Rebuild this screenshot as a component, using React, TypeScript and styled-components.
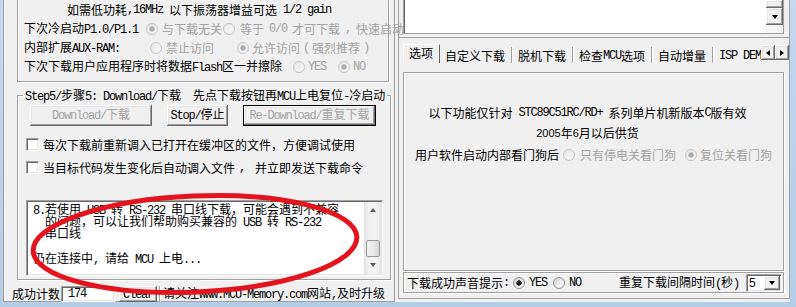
import React from "react";
import styled, { createGlobalStyle, css } from "styled-components";

const FACE = "#f0f0f0";
const SHADOW = "#a0a0a0";
const DARK = "#696969";
const GRAY_TEXT = "#a3a3a3";

const GlobalStyle = createGlobalStyle`
  * { box-sizing: border-box; }
  html, body { margin: 0; padding: 0; }
  body {
    background: #b9d0ea;
    font-family: "Noto Sans CJK SC", "Liberation Sans", sans-serif;
    font-size: 12px;
    line-height: 14px;
    color: #000;
  }
`;

const raised = css`
  background: ${FACE};
  box-shadow: inset -1px -1px ${DARK}, inset 1px 1px #fff, inset -2px -2px ${SHADOW},
    inset 2px 2px #e3e3e3;
`;

const sunken = css`
  background: #fff;
  border: 1px solid;
  border-color: ${SHADOW} #fff #fff ${SHADOW};
  box-shadow: inset 1px 1px ${DARK}, inset -1px -1px #e3e3e3;
`;

const etched = css`
  border: 1px solid ${SHADOW};
  box-shadow: inset 1px 1px #fff, 1px 1px 0 #fff;
`;

// latin runs: SimSun draws them half width, 6px a glyph
const L = styled.span`
  font-family: "Liberation Mono", "DejaVu Sans Mono", monospace;
  font-size: 12px;
  letter-spacing: -1.2px;
  white-space: pre;
`;

const Num = styled.span`
  font-family: "Liberation Sans", Arial, sans-serif;
  font-size: 11px;
`;

type Dir = "up" | "down" | "left" | "right";

const Tri = styled.span<{ $dir: Dir; $color?: string }>`
  display: block;
  width: 0;
  height: 0;
  ${({ $dir, $color = "#000" }) => {
    const side = "3.5px solid transparent";
    const fill = `4px solid ${$color}`;
    if ($dir === "down") return css`border-left: ${side}; border-right: ${side}; border-top: ${fill};`;
    if ($dir === "up") return css`border-left: ${side}; border-right: ${side}; border-bottom: ${fill};`;
    if ($dir === "left") return css`border-top: ${side}; border-bottom: ${side}; border-right: ${fill};`;
    return css`border-top: ${side}; border-bottom: ${side}; border-left: ${fill};`;
  }}
`;

const Window = styled.div`
  position: relative;
  width: 796px;
  height: 307px;
  overflow: hidden;
  padding: 0 6px 5px 3px;
  background: linear-gradient(to bottom, #c4d7ed, #b4cce7);
`;

const Client = styled.div`
  display: flex;
  gap: 3px;
  height: 302px;
  background: ${FACE};
`;

const Panel = styled.div<{ $h: number }>`
  flex: none;
  display: flex;
  flex-direction: column;
  width: 392px;
  height: ${(p) => p.$h}px;
  border: 1px solid ${SHADOW};
  border-top: none;
`;

/* ---------- left side ---------- */

const TopGroup = styled.div`
  margin-left: 13px;
  width: 372px;
  height: 82px;
  border: 1px solid ${SHADOW};
  border-top: none;
  box-shadow: inset 1px 0 #fff, 1px 1px 0 #fff;
`;

const Row = styled.div<{ $center?: boolean }>`
  display: flex;
  align-items: center;
  height: 19px;
  white-space: nowrap;
  padding-left: ${(p) => (p.$center ? 0 : 6)}px;
  padding-right: ${(p) => (p.$center ? 8 : 0)}px;
  justify-content: ${(p) => (p.$center ? "center" : "flex-start")};
`;

const Cell = styled.span<{ $w: number }>`
  flex: none;
  width: ${(p) => p.$w}px;
`;

const Option = styled.span<{ $w?: number; $ml?: number; $gap?: number; $disabled?: boolean }>`
  flex: none;
  display: flex;
  align-items: center;
  gap: ${(p) => p.$gap ?? 4}px;
  margin-left: ${(p) => p.$ml ?? 0}px;
  ${(p) => p.$w && css`width: ${p.$w}px;`}
  color: ${(p) => (p.$disabled ? GRAY_TEXT : "inherit")};
`;

const RadioMark = styled.span<{ $checked?: boolean; $disabled?: boolean }>`
  flex: none;
  width: 12px;
  height: 12px;
  border-radius: 50%;
  border: 1px solid ${(p) => (p.$disabled ? "#c6c6c6" : "#8e8f8f")};
  background: ${(p) => {
    const base = p.$disabled
      ? "linear-gradient(135deg, #e6e6e6, #fafafa)"
      : "linear-gradient(135deg, #d4d4d4, #ffffff)";
    if (!p.$checked) return base;
    const dot = p.$disabled ? "#adadad" : "#1e1e1e";
    return `radial-gradient(circle, ${dot} 0 2.4px, transparent 3px), ${base}`;
  }};
`;

const GroupBox = styled.div`
  margin: 13px 0 0 13px;
  width: 374px;
  height: 186px;
  padding: 0 7px 0 8px;
  ${etched}
`;

const Caption = styled.div`
  width: fit-content;
  height: 14px;
  margin: -8px 0 0 -3px;
  padding: 0 2px;
  background: ${FACE};
  white-space: nowrap;
`;

const ButtonRow = styled.div`
  display: flex;
  gap: 15px;
  margin-top: 3px;
  padding-left: 4px;
`;

const PushButton = styled.button<{ $w: number; $default?: boolean }>`
  flex: none;
  width: ${(p) => p.$w}px;
  height: 21px;
  margin: 0;
  padding: 0;
  font: inherit;
  line-height: 14px;
  white-space: nowrap;
  border: ${(p) => (p.$default ? "1px solid #000" : "none")};
  color: ${(p) => (p.disabled ? GRAY_TEXT : "#000")};
  ${raised}
`;

const CheckRow = styled.label<{ $mt: number }>`
  display: flex;
  align-items: center;
  gap: 4px;
  height: 18px;
  margin-top: ${(p) => p.$mt}px;
  white-space: nowrap;
`;

const CheckBox = styled.span`
  flex: none;
  width: 13px;
  height: 13px;
  ${sunken}
`;

const Memo = styled.div`
  display: flex;
  margin-top: 23px;
  height: 76px;
  padding: 1px;
  ${sunken}
`;

const MemoText = styled.div`
  flex: 1;
  padding: 1px 0 0 5px;
`;

const MemoLine = styled.div`
  height: 12.3px;
  line-height: 12.3px;
  white-space: pre;
`;

const VScroll = styled.div`
  flex: none;
  width: 17px;
  display: flex;
  flex-direction: column;
  background: linear-gradient(to right, #e2e2e2, #f3f3f3 30%, #f3f3f3 70%, #e6e6e6);
`;

const ScrollArrow = styled.div`
  flex: none;
  height: 17px;
  display: flex;
  align-items: center;
  justify-content: center;
`;

const ScrollTrack = styled.div`
  flex: 1;
  display: flex;
  flex-direction: column;
  justify-content: flex-end;
  align-items: center;
`;

const Thumb = styled.div`
  width: 14px;
  height: 17px;
  border: 1px solid #979797;
  border-radius: 2px;
  background: linear-gradient(to right, #f4f4f4, #e8e8e8 50%, #d6d6d6);
`;

const StatusRow = styled.div`
  display: flex;
  align-items: center;
  height: 15px;
  margin-top: 6px;
  padding-left: 8px;
  white-space: nowrap;
`;

const CountBox = styled.div`
  flex: none;
  width: 54px;
  height: 16px;
  margin-left: 1px;
  padding-left: 6px;
  display: flex;
  align-items: center;
  ${sunken}
`;

const SmallButton = styled.button`
  flex: none;
  width: 38px;
  height: 16px;
  margin: 0 0 0 4px;
  padding: 0;
  border: none;
  font: inherit;
  line-height: 14px;
  color: #000;
  ${raised}
`;

const StatusText = styled.div`
  margin-left: 2px;
  padding-left: 3px;
  border-left: 1px solid ${SHADOW};
  box-shadow: inset 1px 0 #fff;
`;

/* ---------- right side ---------- */

const TopSection = styled.div`
  flex: none;
  height: 38px;
  padding-left: 4px;
  border-bottom: 1px solid ${SHADOW};
`;

const OutBox = styled.div`
  display: flex;
  justify-content: flex-end;
  width: 381px;
  height: 34px;
  background: #fff;
  border: 1px solid ${SHADOW};
  border-top: none;
  box-shadow: inset 1px 0 ${DARK};
`;

const ClassicScroll = styled.div`
  width: 17px;
  display: flex;
  flex-direction: column;
  background: #f4f4f4;
`;

const ClassicThumb = styled.div`
  height: 8px;
  ${raised}
`;

const ArrowButton = styled.div<{ $w: number; $h: number }>`
  flex: none;
  width: ${(p) => p.$w}px;
  height: ${(p) => p.$h}px;
  display: flex;
  align-items: center;
  justify-content: center;
  ${raised}
`;

const TabStrip = styled.div`
  display: flex;
  height: 19px;
  margin: 6px 0 0 4px;
  width: 386px;
`;

const Tabs = styled.div`
  flex: 1;
  display: flex;
  overflow: hidden;
  white-space: nowrap;
`;

const Tab = styled.div<{ $active?: boolean }>`
  flex: none;
  display: flex;
  align-items: center;
  height: 19px;
  padding: 0 6px 0 5px;
  ${(p) =>
    p.$active
      ? css`
          border-left: 1px solid #fff;
          border-top: 1px solid #fff;
          border-right: 1px solid ${DARK};
          padding-bottom: 2px;
        `
      : css`
          margin: 3px 1px 0 0;
          height: 16px;
          padding-top: 1px;
          border-right: 1px solid ${SHADOW};
          box-shadow: 1px 0 0 #fff;
        `}
`;

const Spin = styled.div`
  flex: none;
  display: flex;
  padding-top: 1px;
`;

const InnerPanel = styled.div`
  flex: none;
  width: 381px;
  height: 199px;
  margin: 9px 0 0 4px;
  padding-top: 30px;
  ${etched}
`;

const Center = styled.div`
  display: flex;
  justify-content: center;
  align-items: center;
  height: 20px;
  padding-right: 12px;
  white-space: nowrap;
`;

const DogRow = styled.div`
  display: flex;
  align-items: center;
  height: 20px;
  margin-top: 2px;
  padding-left: 11px;
  white-space: nowrap;
`;

const BottomRow = styled.div`
  flex: none;
  display: flex;
  align-items: center;
  width: 381px;
  height: 21px;
  margin: 1px 0 0 4px;
  padding: 0 1px 0 3px;
  white-space: nowrap;
  ${etched}
`;

const RightLabel = styled.span`
  margin-left: auto;
`;

const Combo = styled.div`
  flex: none;
  display: flex;
  align-items: center;
  justify-content: space-between;
  width: 36px;
  height: 18px;
  margin-left: 7px;
  padding: 0 1px 0 2px;
  ${sunken}
`;

const ComboValue = styled.span`
  font-family: "Liberation Sans", Arial, sans-serif;
  font-size: 12px;
`;

const Annotation = styled.svg`
  position: absolute;
  left: 0;
  top: 0;
  width: 796px;
  height: 307px;
  pointer-events: none;
`;

export default function App() {
  return (
    <>
      <GlobalStyle />
      <Window>
        <Client>
          <Panel $h={302}>
            <TopGroup>
              <Row $center>
                如需低功耗<L>,16MHz </L>以下振荡器增益可选<L> 1/2 gain</L>
              </Row>
              <Row>
                <Cell $w={122}>
                  下次冷启动<L>P1.0/P1.1</L>
                </Cell>
                <Option $w={77} $disabled>
                  <RadioMark $checked $disabled />
                  与下载无关
                </Option>
                <Option $gap={5} $disabled>
                  <RadioMark $disabled />
                  等于<L>0/0</L>才可下载<L>,</L>快速启动
                </Option>
              </Row>
              <Row>
                <Cell $w={126}>
                  内部扩展<L>AUX-RAM:</L>
                </Cell>
                <Option $w={87} $disabled>
                  <RadioMark $disabled />
                  禁止访问
                </Option>
                <Option $gap={3} $disabled>
                  <RadioMark $checked $disabled />
                  允许访问<L>(</L>强烈推荐<L>)</L>
                </Option>
              </Row>
              <Row>
                <Cell $w={269}>
                  下次下载用户应用程序时将数据<L>Flash</L>区一并擦除
                </Cell>
                <Option $w={45} $gap={3} $disabled>
                  <RadioMark $disabled />
                  <L>YES</L>
                </Option>
                <Option $gap={3} $disabled>
                  <RadioMark $checked $disabled />
                  <L>NO</L>
                </Option>
              </Row>
            </TopGroup>

            <GroupBox>
              <Caption>
                <L>Step5/</L>步骤<L>5: Download/</L>下载<L>  </L>先点下载按钮再<L>MCU</L>上电复位
                <L>-</L>冷启动
              </Caption>
              <ButtonRow>
                <PushButton $w={122} disabled>
                  <L>Download/</L>下载
                </PushButton>
                <PushButton $w={61}>
                  <L>Stop/</L>停止
                </PushButton>
                <PushButton $w={133} $default disabled>
                  <L>Re-Download/</L>重复下载
                </PushButton>
              </ButtonRow>
              <CheckRow $mt={10}>
                <CheckBox />
                每次下载前重新调入已打开在缓冲区的文件，方便调试使用
              </CheckRow>
              <CheckRow $mt={5}>
                <CheckBox />
                当目标代码发生变化后自动调入文件<L>, </L>并立即发送下载命令
              </CheckRow>
              <Memo>
                <MemoText>
                  <MemoLine>
                    <L>8.</L>若使用<L> USB </L>转<L> RS-232 </L>串口线下载，可能会遇到不兼容
                  </MemoLine>
                  <MemoLine>
                    <L>  </L>的问题，可以让我们帮助购买兼容的<L> USB </L>转<L> RS-232</L>
                  </MemoLine>
                  <MemoLine>
                    <L>  </L>串口线
                  </MemoLine>
                  <MemoLine />
                  <MemoLine>
                    仍在连接中<L>, </L>请给<L> MCU </L>上电<L>...</L>
                  </MemoLine>
                </MemoText>
                <VScroll>
                  <ScrollArrow>
                    <Tri $dir="up" $color="#5a5a5a" />
                  </ScrollArrow>
                  <ScrollTrack>
                    <Thumb />
                  </ScrollTrack>
                  <ScrollArrow>
                    <Tri $dir="down" $color="#5a5a5a" />
                  </ScrollArrow>
                </VScroll>
              </Memo>
            </GroupBox>

            <StatusRow>
              成功计数
              <CountBox>
                <L>174</L>
              </CountBox>
              <SmallButton>
                <L>Clear</L>
              </SmallButton>
              <StatusText>
                请关注<L>www.MCU-Memory.com</L>网站<L>,</L>及时升级
              </StatusText>
            </StatusRow>
          </Panel>

          <Panel $h={299}>
            <TopSection>
              <OutBox>
                <ClassicScroll>
                  <ClassicThumb />
                  <ArrowButton $w={17} $h={17}>
                    <Tri $dir="down" />
                  </ArrowButton>
                </ClassicScroll>
              </OutBox>
            </TopSection>

            <TabStrip>
              <Tabs>
                <Tab $active>选项</Tab>
                <Tab>自定义下载</Tab>
                <Tab>脱机下载</Tab>
                <Tab>
                  检查<L>MCU</L>选项
                </Tab>
                <Tab>自动增量</Tab>
                <Tab>
                  <L>ISP DEMO</L>
                </Tab>
              </Tabs>
              <Spin>
                <ArrowButton $w={14} $h={15}>
                  <Tri $dir="left" />
                </ArrowButton>
                <ArrowButton $w={14} $h={15}>
                  <Tri $dir="right" />
                </ArrowButton>
              </Spin>
            </TabStrip>

            <InnerPanel>
              <Center>
                以下功能仅针对<L> STC89C51RC/RD+ </L>系列单片机新版本<L>C</L>版有效
              </Center>
              <Center>
                <Num>2005</Num>年<Num>6</Num>月以后供货
              </Center>
              <DogRow>
                <Cell $w={144}>用户软件启动内部看门狗后</Cell>
                <Option $ml={4} $gap={5} $disabled>
                  <RadioMark $disabled />
                  只有停电关看门狗
                </Option>
                <Option $ml={9} $gap={3} $disabled>
                  <RadioMark $checked $disabled />
                  复位关看门狗
                </Option>
              </DogRow>
            </InnerPanel>

            <BottomRow>
              下载成功声音提示<L>:</L>
              <Option $ml={4}>
                <RadioMark $checked />
                <L>YES</L>
              </Option>
              <Option $ml={6}>
                <RadioMark />
                <L>NO</L>
              </Option>
              <RightLabel>
                重复下载间隔时间<L>(</L>秒<L>)</L>
              </RightLabel>
              <Combo>
                <ComboValue>5</ComboValue>
                <ArrowButton $w={16} $h={14}>
                  <Tri $dir="down" />
                </ArrowButton>
              </Combo>
            </BottomRow>
          </Panel>
        </Client>

        <Annotation viewBox="0 0 796 307">
          <ellipse
            cx="195"
            cy="244"
            rx="162"
            ry="48"
            fill="none"
            stroke="#e3141d"
            strokeWidth="5"
            transform="rotate(-2.5 195 244)"
          />
        </Annotation>
      </Window>
    </>
  );
}
